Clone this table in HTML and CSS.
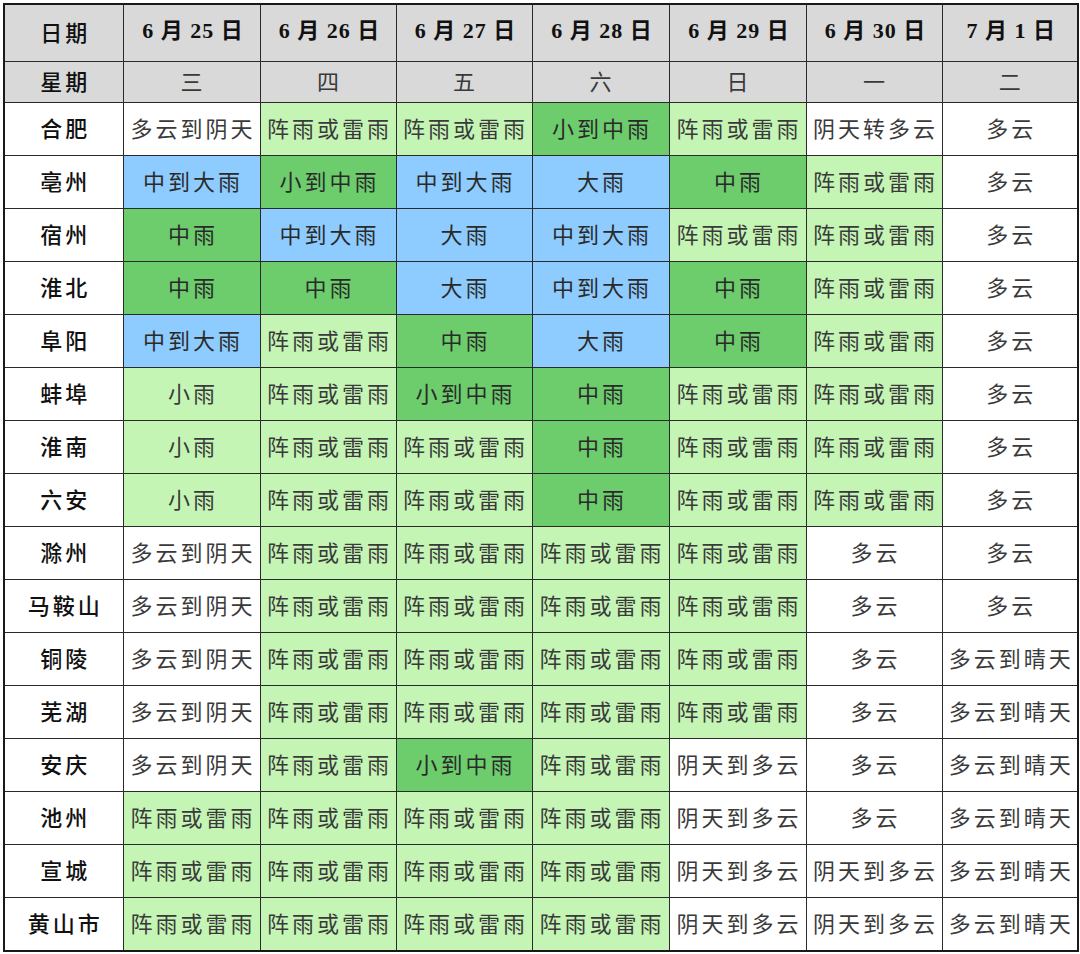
FILE: index.html
```html
<!DOCTYPE html>
<html lang="zh-CN">
<head>
<meta charset="utf-8">
<title>安徽天气预报</title>
<link rel="stylesheet" href="styles.css">
</head>
<body>
<table class="wx">
<colgroup>
<col class="c0"><col class="c1"><col class="c2"><col class="c3"><col class="c4"><col class="c5"><col class="c6"><col class="c7">
</colgroup>
<thead>
<tr class="r-date">
<th>日期</th><th>6 月 25 日</th><th>6 月 26 日</th><th>6 月 27 日</th><th>6 月 28 日</th><th>6 月 29 日</th><th>6 月 30 日</th><th>7 月 1 日</th>
</tr>
<tr class="r-week">
<th>星期</th><td>三</td><td>四</td><td>五</td><td>六</td><td>日</td><td>一</td><td>二</td>
</tr>
</thead>
<tbody>
<tr><th>合肥</th><td>多云到阴天</td><td class="l">阵雨或雷雨</td><td class="l">阵雨或雷雨</td><td class="m">小到中雨</td><td class="l">阵雨或雷雨</td><td>阴天转多云</td><td>多云</td></tr>
<tr><th>亳州</th><td class="b">中到大雨</td><td class="m">小到中雨</td><td class="b">中到大雨</td><td class="b">大雨</td><td class="m">中雨</td><td class="l">阵雨或雷雨</td><td>多云</td></tr>
<tr><th>宿州</th><td class="m">中雨</td><td class="b">中到大雨</td><td class="b">大雨</td><td class="b">中到大雨</td><td class="l">阵雨或雷雨</td><td class="l">阵雨或雷雨</td><td>多云</td></tr>
<tr><th>淮北</th><td class="m">中雨</td><td class="m">中雨</td><td class="b">大雨</td><td class="b">中到大雨</td><td class="m">中雨</td><td class="l">阵雨或雷雨</td><td>多云</td></tr>
<tr><th>阜阳</th><td class="b">中到大雨</td><td class="l">阵雨或雷雨</td><td class="m">中雨</td><td class="b">大雨</td><td class="m">中雨</td><td class="l">阵雨或雷雨</td><td>多云</td></tr>
<tr><th>蚌埠</th><td class="l">小雨</td><td class="l">阵雨或雷雨</td><td class="m">小到中雨</td><td class="m">中雨</td><td class="l">阵雨或雷雨</td><td class="l">阵雨或雷雨</td><td>多云</td></tr>
<tr><th>淮南</th><td class="l">小雨</td><td class="l">阵雨或雷雨</td><td class="l">阵雨或雷雨</td><td class="m">中雨</td><td class="l">阵雨或雷雨</td><td class="l">阵雨或雷雨</td><td>多云</td></tr>
<tr><th>六安</th><td class="l">小雨</td><td class="l">阵雨或雷雨</td><td class="l">阵雨或雷雨</td><td class="m">中雨</td><td class="l">阵雨或雷雨</td><td class="l">阵雨或雷雨</td><td>多云</td></tr>
<tr><th>滁州</th><td>多云到阴天</td><td class="l">阵雨或雷雨</td><td class="l">阵雨或雷雨</td><td class="l">阵雨或雷雨</td><td class="l">阵雨或雷雨</td><td>多云</td><td>多云</td></tr>
<tr><th>马鞍山</th><td>多云到阴天</td><td class="l">阵雨或雷雨</td><td class="l">阵雨或雷雨</td><td class="l">阵雨或雷雨</td><td class="l">阵雨或雷雨</td><td>多云</td><td>多云</td></tr>
<tr><th>铜陵</th><td>多云到阴天</td><td class="l">阵雨或雷雨</td><td class="l">阵雨或雷雨</td><td class="l">阵雨或雷雨</td><td class="l">阵雨或雷雨</td><td>多云</td><td>多云到晴天</td></tr>
<tr><th>芜湖</th><td>多云到阴天</td><td class="l">阵雨或雷雨</td><td class="l">阵雨或雷雨</td><td class="l">阵雨或雷雨</td><td class="l">阵雨或雷雨</td><td>多云</td><td>多云到晴天</td></tr>
<tr><th>安庆</th><td>多云到阴天</td><td class="l">阵雨或雷雨</td><td class="m">小到中雨</td><td class="l">阵雨或雷雨</td><td>阴天到多云</td><td>多云</td><td>多云到晴天</td></tr>
<tr><th>池州</th><td class="l">阵雨或雷雨</td><td class="l">阵雨或雷雨</td><td class="l">阵雨或雷雨</td><td class="l">阵雨或雷雨</td><td>阴天到多云</td><td>多云</td><td>多云到晴天</td></tr>
<tr><th>宣城</th><td class="l">阵雨或雷雨</td><td class="l">阵雨或雷雨</td><td class="l">阵雨或雷雨</td><td class="l">阵雨或雷雨</td><td>阴天到多云</td><td>阴天到多云</td><td>多云到晴天</td></tr>
<tr><th>黄山市</th><td class="l">阵雨或雷雨</td><td class="l">阵雨或雷雨</td><td class="l">阵雨或雷雨</td><td class="l">阵雨或雷雨</td><td>阴天到多云</td><td>阴天到多云</td><td>多云到晴天</td></tr>
</tbody>
</table>
</body>
</html>
```

FILE: styles.css
```css
html, body {
  margin: 0;
  padding: 0;
  background: #ffffff;
}

body {
  padding: 3px;
}

.wx {
  border-collapse: collapse;
  table-layout: fixed;
  width: 1074px;
  border: 2px solid #1a1a1a;
  font-family: "Liberation Serif", "Noto Sans CJK SC", serif;
}

.c0 { width: 119px; }
.c1 { width: 137px; }
.c2 { width: 136px; }
.c3 { width: 136px; }
.c4 { width: 137px; }
.c5 { width: 137px; }
.c6 { width: 136px; }
.c7 { width: 136px; }

.wx th,
.wx td {
  border: 1px solid #2a2a2a;
  padding: 0 0 5px 3px;
  text-align: center;
  vertical-align: middle;
  white-space: nowrap;
  overflow: hidden;
  font-size: 22px;
  letter-spacing: 3px;
  line-height: 1;
}

.wx td {
  font-family: "Noto Sans CJK SC", sans-serif;
  font-weight: 400;
  color: #3a3a3a;
}

.wx th {
  font-family: "Noto Sans CJK SC", sans-serif;
  font-weight: 500;
  color: #111111;
  background: #ffffff;
}

.r-date th {
  height: 51px;
  background: #d9d9d9;
  letter-spacing: 1px;
  font-family: "Liberation Serif", "Noto Sans CJK SC", serif;
  font-weight: 700;
}

.r-date th:first-child {
  font-family: "Noto Sans CJK SC", sans-serif;
  font-weight: 500;
  letter-spacing: 3px;
}

.r-week th,
.r-week td {
  height: 35px;
  background: #d9d9d9;
}

tbody tr th,
tbody tr td {
  height: 47px;
}

.wx td.l { background: #c5f5b5; }
.wx td.m { background: #6dcd6d; color: #2a2a2a; }
.wx td.b { background: #8ecbff; color: #2a2a2a; }
```
